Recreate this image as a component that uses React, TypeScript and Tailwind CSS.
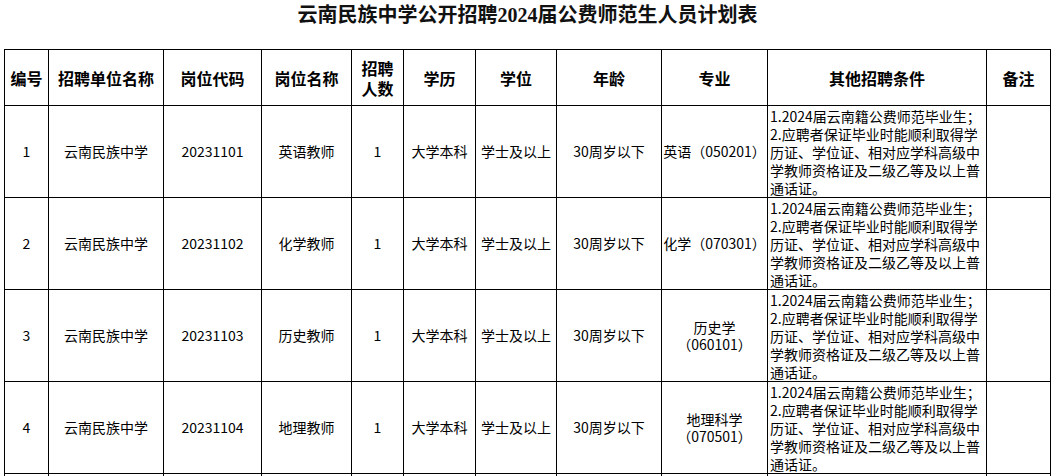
const COLS = "grid-cols-[44px_115px_98px_90px_52px_72px_81px_105px_106px_219px_64px]";

type Row = {
  no: string;
  unit: string;
  code: string;
  post: string;
  count: string;
  edu: string;
  degree: string;
  age: string;
  major: string[];
};

const ROWS: Row[] = [
  { no: "1", unit: "云南民族中学", code: "20231101", post: "英语教师", count: "1", edu: "大学本科", degree: "学士及以上", age: "30周岁以下", major: ["英语（050201）"] },
  { no: "2", unit: "云南民族中学", code: "20231102", post: "化学教师", count: "1", edu: "大学本科", degree: "学士及以上", age: "30周岁以下", major: ["化学（070301）"] },
  { no: "3", unit: "云南民族中学", code: "20231103", post: "历史教师", count: "1", edu: "大学本科", degree: "学士及以上", age: "30周岁以下", major: ["历史学", "（060101）"] },
  { no: "4", unit: "云南民族中学", code: "20231104", post: "地理教师", count: "1", edu: "大学本科", degree: "学士及以上", age: "30周岁以下", major: ["地理科学", "（070501）"] },
];

const CONDITIONS = [
  "1.2024届云南籍公费师范毕业生；",
  "2.应聘者保证毕业时能顺利取得学",
  "历证、学位证、相对应学科高级中",
  "学教师资格证及二级乙等及以上普",
  "通话证。",
];

const HEADERS = ["编号", "招聘单位名称", "岗位代码", "岗位名称", "招聘人数", "学历", "学位", "年龄", "专业", "其他招聘条件", "备注"];

function Cell({ children, className = "" }: { children?: React.ReactNode; className?: string }) {
  return (
    <div className={`flex items-center justify-center border-r border-b border-black text-center ${className}`}>
      {children}
    </div>
  );
}

export default function App() {
  return (
    <div
      className="h-[476px] w-[1060px] overflow-hidden bg-white text-black"
      style={{ fontFamily: '"Noto Sans CJK SC", sans-serif' }}
    >
      <div
        className="h-[49px] pt-[4px] pl-[4px] w-[1051px] text-center text-[20px] leading-[23px] font-bold text-[#111]"
        style={{ fontFamily: '"Liberation Serif", "Noto Sans CJK SC", serif' }}
      >
        云南民族中学公开招聘2024届公费师范生人员计划表
      </div>

      <div className={`ml-[4px] grid w-[1047px] ${COLS} border-l border-t border-black`}>
        {HEADERS.map((h) => (
          <Cell key={h} className="h-[56px] text-[16px] font-bold leading-[20px]">
            {h === "招聘人数" ? (
              <span>
                招聘
                <br />
                人数
              </span>
            ) : (
              h
            )}
          </Cell>
        ))}

        {ROWS.map((r) => (
          <div key={r.no} className="contents text-[14px]">
            <Cell className="h-[92px]">{r.no}</Cell>
            <Cell>{r.unit}</Cell>
            <Cell>{r.code}</Cell>
            <Cell>{r.post}</Cell>
            <Cell>{r.count}</Cell>
            <Cell>{r.edu}</Cell>
            <Cell>{r.degree}</Cell>
            <Cell>{r.age}</Cell>
            <Cell className="flex-col leading-[17px]">
              {r.major.map((m) => (
                <span key={m} className="whitespace-nowrap">
                  {m}
                </span>
              ))}
            </Cell>
            <Cell className="flex-col items-start justify-center pl-[2px] text-left leading-[18px]">
              {CONDITIONS.map((c) => (
                <span key={c} className="whitespace-nowrap">
                  {c}
                </span>
              ))}
            </Cell>
            <Cell />
          </div>
        ))}

        {HEADERS.map((h) => (
          <Cell key={`next-${h}`} className="h-[92px]" />
        ))}
      </div>
    </div>
  );
}
